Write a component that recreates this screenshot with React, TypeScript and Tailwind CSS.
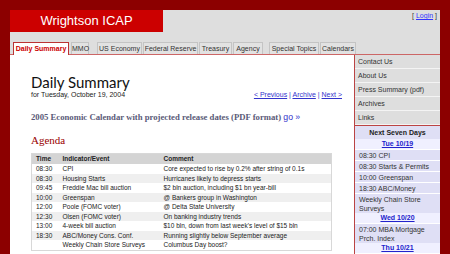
import React from 'react';

const tabs = [
  { label: 'Daily Summary', w: 56, active: true, gap: 2 },
  { label: 'MMO', w: 18, gap: 8 },
  { label: 'US Economy', w: 45, gap: 1 },
  { label: 'Federal Reserve', w: 55, gap: 1 },
  { label: 'Treasury', w: 33, gap: 1 },
  { label: 'Agency', w: 30, gap: 6 },
  { label: 'Special Topics', w: 50, gap: 1 },
  { label: 'Calendars', w: 36, gap: 0 },
];

const agenda = [
  ['08:30', 'CPI', 'Core expected to rise by 0.2% after string of 0.1s'],
  ['08:30', 'Housing Starts', 'Hurricanes likely to depress starts'],
  ['09:45', 'Freddie Mac bill auction', '$2 bln auction, including $1 bn year-bill'],
  ['10:00', 'Greenspan', '@ Bankers group in Washington'],
  ['12:00', 'Poole (FOMC voter)', '@ Delta State University'],
  ['12:30', 'Olsen (FOMC voter)', 'On banking industry trends'],
  ['13:00', '4-week bill auction', "$10 bln, down from last week's level of $15 bln"],
  ['18:30', 'ABC/Money Cons. Conf.', 'Running slightly below September average'],
  ['', 'Weekly Chain Store Surveys', 'Columbus Day boost?'],
];

const sideLinks = ['Contact Us', 'About Us', 'Press Summary (pdf)', 'Archives', 'Links'];

const week: { day: string; items: string[][] }[] = [
  {
    day: 'Tue 10/19',
    items: [['08:30 CPI'], ['08:30 Starts & Permits'], ['10:00 Greenspan'], ['18:30 ABC/Money'], ['Weekly Chain Store', 'Surveys']],
  },
  { day: 'Wed 10/20', items: [['07:00 MBA Mortgage', 'Prch. Index']] },
  { day: 'Thu 10/21', items: [['08:30 Jobless Claims']] },
];

export default function App() {
  return (
    <div
      className="w-[450px] h-[254px] overflow-hidden bg-[#8c0000] pt-[10px] px-[10px] text-[#222]"
      style={{ fontFamily: '"Liberation Sans", Arial, sans-serif' }}
    >
      <div className="w-[430px] bg-white">
        {/* header */}
        <div className="bg-[#dedede] h-[45px] flex flex-col">
          <div className="flex h-[22px]">
            <div className="w-[153px] bg-[#cc0000] text-white text-[13px] leading-[22px] text-center">
              Wrightson ICAP
            </div>
            <div className="flex-1 text-right pr-[3px] text-[7px] leading-[12px] text-[#333]">
              [ <span className="text-[#3333ff] underline">Login</span> ]
            </div>
          </div>
          <div className="flex mt-auto pl-[3px] items-end border-b border-[#cc6666]">
            {tabs.map(t => (
              <div
                key={t.label}
                style={{ width: t.w, marginRight: t.gap }}
                className={
                  t.active
                    ? 'h-[13px] -mb-px bg-white border border-b-0 border-[#bb3333] text-[#cc0000] font-bold text-[7px] leading-[12px] text-center'
                    : 'h-[12px] bg-[#e2e2e2] border-x border-t border-[#c4c4c4] text-[#333] text-[7px] leading-[12px] text-center whitespace-nowrap'
                }
              >
                {t.label}
              </div>
            ))}
          </div>
        </div>

        <div className="flex">
          {/* main */}
          <div className="w-[344px] pl-[21px] pr-[12px]">
            <div
              className="mt-[19px] text-[15px] leading-[16px] text-[#111]"
              style={{ fontFamily: 'Lato, "Open Sans", sans-serif' }}
            >
              Daily Summary
            </div>
            <div className="flex justify-between items-end text-[7px] leading-[9px]">
              <span>for Tuesday, October 19, 2004</span>
              <span className="text-[#3333cc]">
                <span className="underline">&lt; Previous</span> | <span className="underline">Archive</span> |{' '}
                <span className="underline">Next &gt;</span>
              </span>
            </div>
            <div
              className="mt-[13px] text-[8.7px] leading-[10px] font-bold text-[#5a5a78]"
              style={{ fontFamily: '"Liberation Serif", "Times New Roman", serif' }}
            >
              2005 Economic Calendar with projected release dates (PDF format){' '}
              <span className="text-[#3333cc] font-normal" style={{ fontFamily: '"Liberation Sans", Arial, sans-serif' }}>
                go »
              </span>
            </div>
            <div
              className="mt-[11px] text-[11px] leading-[14px] text-[#990000]"
              style={{ fontFamily: '"Liberation Serif", "Times New Roman", serif' }}
            >
              Agenda
            </div>
            <table className="mt-[6px] w-[301px] border border-[#d8d8d8] border-collapse text-[6.5px]">
              <thead>
                <tr className="bg-[#d4d4d4] h-[10px] font-bold text-left">
                  <th className="w-[27px] pl-[4px] leading-[10px]">Time</th>
                  <th className="w-[101px] pl-[4px] leading-[10px]">Indicator/Event</th>
                  <th className="pl-[4px] leading-[10px]">Comment</th>
                </tr>
              </thead>
              <tbody>
                {agenda.map((r, i) => (
                  <tr key={i} className={i % 2 === 0 ? 'bg-white' : 'bg-[#efefef]'}>
                    <td className="pl-[4px] h-[9.5px] leading-[9.5px]">{r[0]}</td>
                    <td className="pl-[4px] leading-[9.5px]">{r[1]}</td>
                    <td className="pl-[4px] leading-[9.5px]">{r[2]}</td>
                  </tr>
                ))}
              </tbody>
            </table>
          </div>

          {/* sidebar */}
          <div className="w-[86px] border-l border-[#bb4444] text-[7px]">
            {sideLinks.map(l => (
              <div key={l} className="h-[14px] leading-[13px] bg-[#dedede] border-b border-[#f4f4f4] pl-[3px] text-[#333]">
                {l}
              </div>
            ))}
            <div className="border-t border-[#bb4444] bg-[#dfdff5]">
              <div className="h-[13px] leading-[14px] text-center font-bold text-[#222]">Next Seven Days</div>
              {week.map(d => (
                <div key={d.day}>
                  <div className="h-[10px] leading-[10px] bg-[#f0f0ff] text-center font-bold text-[#2222cc] underline">
                    {d.day}
                  </div>
                  {d.items.map((it, j) => (
                    <div key={j} className="border-t border-white pl-[4px] pt-[1px] leading-[9px] text-[#333]">
                      {it.map(s => (
                        <div key={s}>{s}</div>
                      ))}
                    </div>
                  ))}
                </div>
              ))}
            </div>
          </div>
        </div>
      </div>
    </div>
  );
}
